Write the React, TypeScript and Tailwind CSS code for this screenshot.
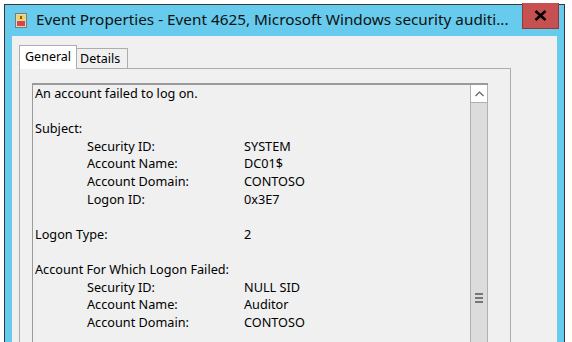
import React from 'react';

const rows: { label?: string; value?: string; indent?: boolean }[] = [
  { label: 'An account failed to log on.' },
  {},
  { label: 'Subject:' },
  { label: 'Security ID:', value: 'SYSTEM', indent: true },
  { label: 'Account Name:', value: 'DC01$', indent: true },
  { label: 'Account Domain:', value: 'CONTOSO', indent: true },
  { label: 'Logon ID:', value: '0x3E7', indent: true },
  {},
  { label: 'Logon Type:', value: '2' },
  {},
  { label: 'Account For Which Logon Failed:' },
  { label: 'Security ID:', value: 'NULL SID', indent: true },
  { label: 'Account Name:', value: 'Auditor', indent: true },
  { label: 'Account Domain:', value: 'CONTOSO', indent: true },
  {},
  {},
];

function EventIcon() {
  return (
    <svg width="12" height="15" viewBox="0 0 12 15">
      <rect x="0.5" y="0.5" width="11" height="14" fill="#d8d8d8" stroke="#7a7a7a" />
      <rect x="2" y="2" width="8" height="5" fill="#f4d34a" />
      <rect x="2" y="8" width="8" height="5" fill="#d9473c" />
      <rect x="5" y="3" width="2" height="3" fill="#8a5a00" />
    </svg>
  );
}

export default function App() {
  return (
    <div className="h-[342px] w-[572px] overflow-hidden bg-white pl-[4px] pt-[4px] text-black" style={{ fontFamily: '"Noto Sans", sans-serif' }}>
      <div className="w-[561px] h-[400px] border border-b-0 border-[#2f3b40] bg-[#66cbec] flex flex-col">
        {/* title bar */}
        <div className="h-[31px] flex items-start shrink-0">
          <div className="pl-[10px] pt-[8px]">
            <EventIcon />
          </div>
          <div className="pl-[9px] pt-[4px] text-[15.3px] leading-[20px] text-[#111] whitespace-nowrap">
            Event Properties - Event 4625, Microsoft Windows security auditi...
          </div>
          <div className="ml-auto mr-[5px] -mt-[2px] w-[37px] h-[26px] bg-[#c75050] border border-[#8f3a3a] border-t-0 flex items-center justify-center">
            <svg width="13" height="11" viewBox="0 0 13 11">
              <path d="M1.5 1 L11.5 10 M11.5 1 L1.5 10" stroke="#000" strokeWidth="2.6" />
            </svg>
          </div>
        </div>
        {/* client area */}
        <div className="mx-[7px] flex-1 bg-[#f0f0f0] pl-[7px] pt-[8px]">
          <div className="flex items-end h-[24px] text-[12.5px]">
            <div className="h-[24px] w-[58px] border border-b-0 border-[#adadad] bg-white pl-[5px] pt-[3px] leading-[16px] relative z-10 -mb-px pb-px">
              General
            </div>
            <div className="h-[20px] w-[51px] border border-b-0 border-l-0 border-[#adadad] bg-[#f0f0f0] pl-[3px] pt-[2px] leading-[16px]">
              Details
            </div>
          </div>
          <div className="w-[492px] h-[300px] border border-[#adadad] bg-[#f0f0f0] pl-[12px] pt-[14px]">
            <div className="w-[456px] h-[280px] border-l border-t-2 border-[#9a9a9a] flex">
              <div className="flex-1 pl-[2px] text-[12.7px] leading-[17.6px] whitespace-nowrap">
                {rows.map((r, i) => (
                  <div key={i} className="flex h-[17.6px]">
                    <span className={r.indent ? 'pl-[52px] w-[209px]' : r.value ? 'w-[209px]' : ''}>{r.label}</span>
                    {r.value && <span>{r.value}</span>}
                  </div>
                ))}
              </div>
              <div className="w-[18px] border-x border-[#b0b0b0] bg-[#dcdcdc] flex flex-col">
                <div className="h-[18px] bg-white flex items-center justify-center border-b border-[#b0b0b0]">
                  <svg width="9" height="6" viewBox="0 0 9 6">
                    <path d="M0.5 5 L4.5 1 L8.5 5" fill="none" stroke="#606060" strokeWidth="1.2" />
                  </svg>
                </div>
                <div className="flex-1 flex flex-col items-center pt-[190px] gap-[2px]">
                  <div className="w-[8px] h-[2px] bg-[#777]" />
                  <div className="w-[8px] h-[2px] bg-[#777]" />
                  <div className="w-[8px] h-[2px] bg-[#777]" />
                </div>
              </div>
            </div>
          </div>
        </div>
      </div>
    </div>
  );
}
